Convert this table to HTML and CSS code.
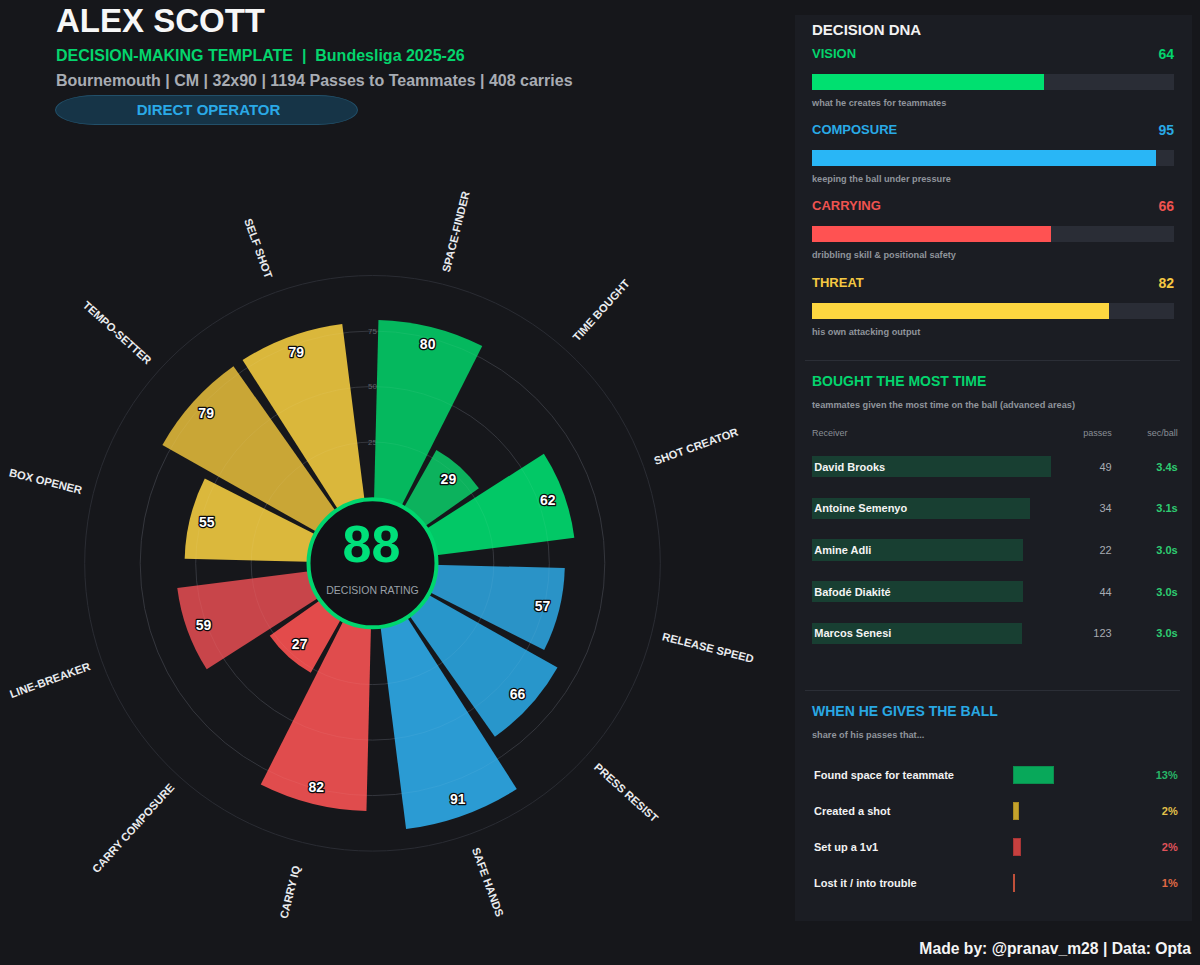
FILE: index.html
```html
<!DOCTYPE html>
<html lang="en">
<head>
<meta charset="utf-8">
<title>Alex Scott – Decision-Making Template</title>
<link rel="stylesheet" href="styles.css">
</head>
<body>
<div class="page">
  <main class="left">
    <header class="header">
      <h1 class="name">ALEX SCOTT</h1>
      <div class="subtitle">DECISION-MAKING TEMPLATE&nbsp; |&nbsp; Bundesliga 2025-26</div>
      <div class="meta">Bournemouth | CM | 32x90 | 1194 Passes to Teammates | 408 carries</div>
      <div class="pill">DIRECT OPERATOR</div>
    </header>

    <svg class="polar" viewBox="0 0 795 800" width="795" height="800">
      <g transform="translate(372.5 433.3)">
        <g class="grid">
          <circle r="121.3"/><circle r="176.8"/><circle r="232.3"/><circle r="287.8"/>
        </g>
        <g class="ticks">
          <text y="-121.3">25</text>
          <text y="-176.8">50</text>
          <text y="-232.3">75</text>
        </g>
        <g class="bars">
          <path class="g1" transform="rotate(14.1)" d="M0 0L-53.51 -237.44A243.4 243.4 0 0 1 53.51 -237.44Z"/>
          <path class="g2" transform="rotate(42.1)" d="M0 0L-28.62 -126.99A130.18 130.18 0 0 1 28.62 -126.99Z"/>
          <path class="g3" transform="rotate(70.1)" d="M0 0L-44.73 -198.46A203.44 203.44 0 0 1 44.73 -198.46Z"/>
          <path class="b1" transform="rotate(104.1)" d="M0 0L-42.29 -187.63A192.34 192.34 0 0 1 42.29 -187.63Z"/>
          <path class="b2" transform="rotate(132.1)" d="M0 0L-46.68 -207.12A212.32 212.32 0 0 1 46.68 -207.12Z"/>
          <path class="b3" transform="rotate(160.1)" d="M0 0L-58.88 -261.27A267.82 267.82 0 0 1 58.88 -261.27Z"/>
          <path class="r1" transform="rotate(194.1)" d="M0 0L-54.49 -241.78A247.84 247.84 0 0 1 54.49 -241.78Z"/>
          <path class="r2" transform="rotate(222.1)" d="M0 0L-27.64 -122.66A125.74 125.74 0 0 1 27.64 -122.66Z"/>
          <path class="r3" transform="rotate(250.1)" d="M0 0L-43.26 -191.96A196.78 196.78 0 0 1 43.26 -191.96Z"/>
          <path class="y1" transform="rotate(284.1)" d="M0 0L-41.31 -183.3A187.9 187.9 0 0 1 41.31 -183.3Z"/>
          <path class="y2" transform="rotate(312.1)" d="M0 0L-53.02 -235.28A241.18 241.18 0 0 1 53.02 -235.28Z"/>
          <path class="y3" transform="rotate(340.1)" d="M0 0L-53.02 -235.28A241.18 241.18 0 0 1 53.02 -235.28Z"/>
        </g>
        <g class="grid-over">
          <circle r="121.3"/><circle r="176.8"/><circle r="232.3"/>
        </g>
        <g class="values">
          <g transform="rotate(14.1)"><text transform="translate(0 -226.4) rotate(-14.1)">80</text></g>
          <g transform="rotate(42.1)"><text transform="translate(0 -113.2) rotate(-42.1)">29</text></g>
          <g transform="rotate(70.1)"><text transform="translate(0 -186.4) rotate(-70.1)">62</text></g>
          <g transform="rotate(104.1)"><text transform="translate(0 -175.3) rotate(-104.1)">57</text></g>
          <g transform="rotate(132.1)"><text transform="translate(0 -195.3) rotate(-132.1)">66</text></g>
          <g transform="rotate(160.1)"><text transform="translate(0 -250.8) rotate(-160.1)">91</text></g>
          <g transform="rotate(194.1)"><text transform="translate(0 -230.8) rotate(-194.1)">82</text></g>
          <g transform="rotate(222.1)"><text transform="translate(0 -108.7) rotate(-222.1)">27</text></g>
          <g transform="rotate(250.1)"><text transform="translate(0 -179.8) rotate(-250.1)">59</text></g>
          <g transform="rotate(284.1)"><text transform="translate(0 -170.9) rotate(-284.1)">55</text></g>
          <g transform="rotate(312.1)"><text transform="translate(0 -224.2) rotate(-312.1)">79</text></g>
          <g transform="rotate(340.1)"><text transform="translate(0 -224.2) rotate(-340.1)">79</text></g>
        </g>
        <g class="axis-labels">
          <g transform="rotate(14.1)"><text transform="translate(0 -342) rotate(-90)">SPACE-FINDER</text></g>
          <g transform="rotate(42.1)"><text transform="translate(0 -341) rotate(-90)">TIME BOUGHT</text></g>
          <g transform="rotate(70.1)"><text transform="translate(0 -344) rotate(-90)">SHOT CREATOR</text></g>
          <g transform="rotate(104.1)"><text transform="translate(0 -346) rotate(-90)">RELEASE SPEED</text></g>
          <g transform="rotate(132.1)"><text transform="translate(0 -342) rotate(-90)">PRESS RESIST</text></g>
          <g transform="rotate(160.1)"><text transform="translate(0 -339) rotate(-90)">SAFE HANDS</text></g>
          <g transform="rotate(194.1)"><text transform="translate(0 -339) rotate(90)">CARRY IQ</text></g>
          <g transform="rotate(222.1)"><text transform="translate(0 -357) rotate(90)">CARRY COMPOSURE</text></g>
          <g transform="rotate(250.1)"><text transform="translate(0 -343) rotate(90)">LINE-BREAKER</text></g>
          <g transform="rotate(284.1)"><text transform="translate(0 -337) rotate(90)">BOX OPENER</text></g>
          <g transform="rotate(312.1)"><text transform="translate(0 -344) rotate(90)">TEMPO-SETTER</text></g>
          <g transform="rotate(340.1)"><text transform="translate(0 -335) rotate(90)">SELF SHOT</text></g>
        </g>
        <circle class="core" r="64"/>
        <text class="score" x="-1" y="-1.5">88</text>
        <text class="score-label" y="30.7">DECISION RATING</text>
      </g>
    </svg>
  </main>

  <aside class="side">
    <div class="panel">
      <section class="dna">
        <h2 class="dna-title">DECISION DNA</h2>
        <div class="dna-row vision">
          <div class="dna-head"><span>VISION</span><span class="dna-val">64</span></div>
          <div class="track"><div class="fill" style="width:64%"></div></div>
          <div class="dna-sub">what he creates for teammates</div>
        </div>
        <div class="dna-row composure">
          <div class="dna-head"><span>COMPOSURE</span><span class="dna-val">95</span></div>
          <div class="track"><div class="fill" style="width:95%"></div></div>
          <div class="dna-sub">keeping the ball under pressure</div>
        </div>
        <div class="dna-row carrying">
          <div class="dna-head"><span>CARRYING</span><span class="dna-val">66</span></div>
          <div class="track"><div class="fill" style="width:66%"></div></div>
          <div class="dna-sub">dribbling skill &amp; positional safety</div>
        </div>
        <div class="dna-row threat">
          <div class="dna-head"><span>THREAT</span><span class="dna-val">82</span></div>
          <div class="track"><div class="fill" style="width:82%"></div></div>
          <div class="dna-sub">his own attacking output</div>
        </div>
      </section>

      <hr class="divider divider-1">

      <section class="bought">
        <h2 class="sec-title green">BOUGHT THE MOST TIME</h2>
        <div class="sec-sub">teammates given the most time on the ball (advanced areas)</div>
        <div class="recv-head">
          <span>Receiver</span><span class="num">passes</span><span class="num">sec/ball</span>
        </div>
        <div class="recv-row">
          <div class="recv-cell"><div class="recv-bar" style="width:238.7px">David Brooks</div></div>
          <span class="passes">49</span><span class="secs">3.4s</span>
        </div>
        <div class="recv-row">
          <div class="recv-cell"><div class="recv-bar" style="width:217.7px">Antoine Semenyo</div></div>
          <span class="passes">34</span><span class="secs">3.1s</span>
        </div>
        <div class="recv-row">
          <div class="recv-cell"><div class="recv-bar" style="width:211px">Amine Adli</div></div>
          <span class="passes">22</span><span class="secs">3.0s</span>
        </div>
        <div class="recv-row">
          <div class="recv-cell"><div class="recv-bar" style="width:211px">Bafodé Diakité</div></div>
          <span class="passes">44</span><span class="secs">3.0s</span>
        </div>
        <div class="recv-row">
          <div class="recv-cell"><div class="recv-bar" style="width:210.3px">Marcos Senesi</div></div>
          <span class="passes">123</span><span class="secs">3.0s</span>
        </div>
      </section>

      <hr class="divider divider-2">

      <section class="gives">
        <h2 class="sec-title blue">WHEN HE GIVES THE BALL</h2>
        <div class="sec-sub">share of his passes that...</div>
        <div class="give-list">
          <div class="give-row space">
            <span class="give-name">Found space for teammate</span>
            <div class="give-track"><div class="give-bar" style="width:41.3px"></div></div>
            <span class="give-pct">13%</span>
          </div>
          <div class="give-row shot">
            <span class="give-name">Created a shot</span>
            <div class="give-track"><div class="give-bar" style="width:6.6px"></div></div>
            <span class="give-pct">2%</span>
          </div>
          <div class="give-row onev1">
            <span class="give-name">Set up a 1v1</span>
            <div class="give-track"><div class="give-bar" style="width:8.3px"></div></div>
            <span class="give-pct">2%</span>
          </div>
          <div class="give-row lost">
            <span class="give-name">Lost it / into trouble</span>
            <div class="give-track"><div class="give-bar" style="width:2.5px"></div></div>
            <span class="give-pct">1%</span>
          </div>
        </div>
      </section>
    </div>
    <div class="credit">Made by: @pranav_m28 | Data: Opta</div>
  </aside>
</div>
</body>
</html>
```

FILE: styles.css
```css
html, body {
  margin: 0;
  padding: 0;
  background: #16171b;
}

body {
  width: 1200px;
  height: 965px;
  overflow: hidden;
  font-family: "Liberation Sans", Arial, sans-serif;
  color: #f2f2f2;
}

.page {
  display: flex;
  width: 1200px;
  height: 965px;
}

/* ---------- left: header + polar chart ---------- */

.left {
  width: 795px;
  flex: none;
  display: flex;
  flex-direction: column;
}

.header {
  padding: 2px 0 0 56px;
}

.name {
  margin: 0;
  font-size: 33px;
  line-height: 38px;
  font-weight: 700;
  color: #f7f7f7;
}

.subtitle {
  margin-top: 5.5px;
  font-size: 16px;
  line-height: 20px;
  font-weight: 700;
  color: #04d46d;
  white-space: nowrap;
}

.meta {
  margin-top: 5px;
  font-size: 16px;
  line-height: 20px;
  font-weight: 700;
  color: #a8acb3;
  white-space: nowrap;
}

.pill {
  margin: 4px 0 0 -1px;
  width: 303px;
  height: 30px;
  box-sizing: border-box;
  padding-left: 4px;
  border: 1px solid #22506a;
  border-radius: 40px / 15px;
  background: #163447;
  color: #2aa9e6;
  font-size: 15px;
  line-height: 28px;
  font-weight: 700;
  text-align: center;
}

.polar {
  display: block;
  margin-top: 5.5px;
  overflow: visible;
}

.grid circle {
  fill: none;
  stroke: #2a2c33;
  stroke-width: 1;
}

.grid-over circle {
  fill: none;
  stroke: rgba(255, 255, 255, 0.05);
  stroke-width: 1;
}

.ticks text {
  font-size: 8px;
  fill: #5d626a;
  text-anchor: middle;
  dominant-baseline: central;
}

.bars .g1 { fill: #05b85e; }
.bars .g2 { fill: #0cb25d; }
.bars .g3 { fill: #02c866; }
.bars .b1 { fill: #2a93c7; }
.bars .b2 { fill: #2896cb; }
.bars .b3 { fill: #2b9bd3; }
.bars .r1 { fill: #e04c4d; }
.bars .r2 { fill: #e34b4b; }
.bars .r3 { fill: #c8454a; }
.bars .y1 { fill: #dbb83c; }
.bars .y2 { fill: #c9a636; }
.bars .y3 { fill: #dab73b; }

.values text {
  font-size: 14px;
  font-weight: 700;
  fill: #ffffff;
  stroke: #0b0b0d;
  stroke-width: 2.6px;
  stroke-linejoin: round;
  paint-order: stroke;
  text-anchor: middle;
  dominant-baseline: central;
}

.axis-labels text {
  font-size: 11.2px;
  font-weight: 700;
  fill: #e9ebee;
  text-anchor: middle;
  dominant-baseline: central;
}

.core {
  fill: #111216;
  stroke: #00d66e;
  stroke-width: 4;
}

.score {
  font-size: 52px;
  font-weight: 700;
  fill: #00e07a;
  text-anchor: middle;
}

.score-label {
  font-size: 10.5px;
  fill: #9aa0a8;
  text-anchor: middle;
}

/* ---------- right: side panel ---------- */

.side {
  width: 397px;
  flex: none;
  display: flex;
  flex-direction: column;
}

.panel {
  margin-top: 15px;
  height: 906px;
  box-sizing: border-box;
  padding-top: 6px;
  background: #1b1d23;
}

.dna {
  padding: 0 18px 0 17px;
}

.dna-title {
  margin: 0;
  font-size: 15px;
  line-height: 18px;
  font-weight: 700;
  color: #f2f2f2;
}

.dna-row {
  height: 76.2px;
}

.dna-row:first-of-type {
  margin-top: 7px;
}

.dna-head {
  display: flex;
  justify-content: space-between;
  align-items: center;
  height: 16px;
  font-size: 13px;
  line-height: 16px;
  font-weight: 700;
}

.dna-val {
  font-size: 14px;
}

.track {
  margin-top: 12px;
  height: 16px;
  background: #2a2d36;
}

.fill {
  height: 100%;
}

.dna-sub {
  margin-top: 7px;
  font-size: 9.2px;
  line-height: 12px;
  font-weight: 700;
  color: #8f949b;
}

.vision .dna-head { color: #04d46d; }
.vision .fill { background: #00e070; }
.composure .dna-head { color: #29aae6; }
.composure .fill { background: #29b6f6; }
.carrying .dna-head { color: #ef5350; }
.carrying .fill { background: #ff5252; }
.threat .dna-head { color: #f5c842; }
.threat .fill { background: #fdd640; }

.divider {
  height: 1px;
  margin: 0 12px 0 10px;
  border: 0;
  background: #2b2e36;
}

.divider-1 { margin-top: 9.2px; }
.divider-2 { margin-top: 45.9px; }

.bought,
.gives {
  padding: 0 14.3px 0 17px;
}

.sec-title {
  margin: 11.2px 0 0;
  font-size: 14px;
  line-height: 18px;
  font-weight: 700;
}

.sec-title.green { color: #04d46d; }
.sec-title.blue { color: #29a8e3; }

.sec-sub {
  margin-top: 9px;
  font-size: 9.2px;
  line-height: 12px;
  font-weight: 700;
  color: #8f949b;
  white-space: nowrap;
}

.recv-head,
.recv-row {
  display: grid;
  grid-template-columns: 1fr 60px 66px;
  align-items: center;
}

.recv-head {
  margin-top: 15.7px;
  font-size: 9px;
  line-height: 12px;
  color: #8a8f96;
}

.num,
.passes,
.secs {
  text-align: right;
}

.recv-row {
  height: 21.3px;
  margin-top: 20.4px;
}

.recv-head + .recv-row {
  margin-top: 17.1px;
}

.recv-bar {
  height: 21.3px;
  box-sizing: border-box;
  padding-left: 2.3px;
  display: flex;
  align-items: center;
  background: #183f32;
  font-size: 11px;
  font-weight: 700;
  color: #f4f4f4;
  white-space: nowrap;
}

.passes {
  font-size: 11px;
  color: #a7abb2;
}

.secs {
  font-size: 11px;
  font-weight: 700;
  color: #2ecc71;
}

.gives .sec-title {
  margin-top: 11.15px;
}

.give-list {
  margin-top: 15.85px;
}

.give-row {
  display: grid;
  grid-template-columns: 200.7px 1fr auto;
  align-items: center;
  height: 36px;
}

.give-name {
  padding-left: 2px;
  font-size: 11px;
  font-weight: 700;
  color: #f2f2f2;
  white-space: nowrap;
}

.give-track {
  display: flex;
  align-items: center;
}

.give-bar {
  height: 17.6px;
  box-sizing: border-box;
}

.give-pct {
  font-size: 11px;
  font-weight: 700;
  text-align: right;
}

.space .give-bar { background: #08a85a; border: 1px solid #0b8e4e; }
.space .give-pct { color: #27b567; }
.shot .give-bar { background: #c4a22c; border: 1px solid #a98a22; }
.shot .give-pct { color: #e3c24a; }
.onev1 .give-bar { background: #c6403f; border: 1px solid #a83536; }
.onev1 .give-pct { color: #e0525a; }
.lost .give-bar { background: #c0503a; }
.lost .give-pct { color: #e06a45; }

.credit {
  margin-top: 17.5px;
  padding-right: 1px;
  font-size: 15.7px;
  line-height: 20px;
  font-weight: 700;
  color: #f4f4f4;
  text-align: right;
  white-space: nowrap;
}
```
